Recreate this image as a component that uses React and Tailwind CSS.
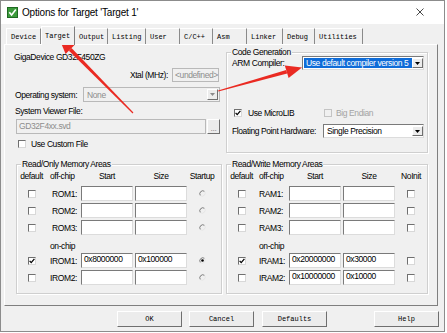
import React from 'react';

const ui = "whitespace-nowrap font-['Liberation_Sans',Arial,sans-serif] text-[8.5px] leading-[10px] tracking-[-0.4px] text-black";
const mono = "whitespace-nowrap font-['Liberation_Mono','Courier_New',monospace] text-[7px] leading-[10px] text-black";
const sunken = 'border border-t-[#7a7a7a] border-l-[#7a7a7a] border-r-[#dcdcdc] border-b-[#dcdcdc] bg-white';
const raised = 'border border-t-white border-l-white border-r-[#6f6f6f] border-b-[#6f6f6f] bg-[#ececec]';
const dimBox = 'border border-[#b9b9b9] bg-[#f0f0f0] text-[#8d8d8d]';

const tabs = [
  { label: 'Device', w: 'w-[35px] border-l border-l-white' },
  { label: 'Target', w: 'w-[34px]', active: true },
  { label: 'Output', w: 'w-[33px]' },
  { label: 'Listing', w: 'w-[38px]' },
  { label: 'User', w: 'w-[34px]' },
  { label: 'C/C++', w: 'w-[33px]' },
  { label: 'Asm', w: 'w-[34px]' },
  { label: 'Linker', w: 'w-[36px]' },
  { label: 'Debug', w: 'w-[32px]' },
  { label: 'Utilities', w: 'w-[48px]' },
];

const romRows = [
  { name: 'ROM1' },
  { name: 'ROM2' },
  { name: 'ROM3' },
  { name: 'IROM1', def: true, start: '0x8000000', size: '0x100000', on: true },
  { name: 'IROM2' },
];

const ramRows = [
  { name: 'RAM1' },
  { name: 'RAM2' },
  { name: 'RAM3' },
  { name: 'IRAM1', def: true, start: '0x20000000', size: '0x30000' },
  { name: 'IRAM2', start: '0x10000000', size: '0x10000' },
];

const roCols = ['w-[29px]', 'w-[31px] pr-[2px] pl-[2px]', 'w-[52px]', 'w-[52px]', 'w-[26px]'];
const rwCols = ['w-[29px]', 'w-[29px] pr-[4px] pl-[1px]', 'w-[52px]', 'w-[52px]', 'w-[28px]'];

function Check({ checked = false, disabled = false }) {
  return (
    <span
      className={`flex h-[8px] w-[8px] shrink-0 items-center justify-center border ${
        disabled ? 'border-[#c4c4c4] bg-[#f0f0f0]' : 'border-t-[#6f6f6f] border-l-[#6f6f6f] border-r-[#d8d8d8] border-b-[#d8d8d8] bg-white'
      }`}
    >
      {checked && (
        <svg width="6" height="6" viewBox="0 0 6 6">
          <path d="M0.6 2.9 L2.2 4.6 L5.4 0.9" fill="none" stroke="#000" strokeWidth="1.3" />
        </svg>
      )}
    </span>
  );
}

function Radio({ on }) {
  return (
    <svg width="7" height="7" viewBox="0 0 7 7">
      <path d="M5.6 1.4 A3 3 0 0 0 1.4 5.6" fill="none" stroke="#6f6f6f" strokeWidth="0.9" />
      <path d="M1.4 5.6 A3 3 0 0 0 5.6 1.4" fill="none" stroke="#e4e4e4" strokeWidth="0.9" />
      {on && <circle cx="3.5" cy="3.5" r="1.3" fill="#000" />}
    </svg>
  );
}

function DropBtn({ dim }) {
  return (
    <span className={`flex h-full w-[11px] shrink-0 items-center justify-center ${raised}`}>
      <svg width="5" height="3" viewBox="0 0 5 3">
        <path d="M0 0H5L2.5 3Z" fill={dim ? '#8a8a8a' : '#000'} />
      </svg>
    </span>
  );
}

function Field({ className, value }) {
  return (
    <div className={`h-[15px] pl-[2px] ${sunken} ${ui} leading-[11px] ${className}`}>
      {value}
    </div>
  );
}

function GroupBox({ title, className, children }) {
  return (
    <div className={`relative border border-[#cfcfcf] shadow-[inset_1px_1px_0_#fff,1px_1px_0_#fff] ${className}`}>
      <span className={`absolute -top-[6px] left-[4px] bg-[#f0f0f0] px-[1px] ${ui}`}>{title}</span>
      {children}
    </div>
  );
}

function MemRow({ cols, row, last }) {
  return (
    <div className="flex h-[15px] items-center gap-[2px]">
      <div className={`flex justify-center ${cols[0]}`}>
        <Check checked={row.def} />
      </div>
      <div className={`text-right ${ui} ${cols[1]}`}>{row.name}:</div>
      <Field className={cols[2]} value={row.start} />
      <Field className={cols[3]} value={row.size} />
      <div className={`flex justify-center ${cols[4]}`}>{last(row)}</div>
    </div>
  );
}

function MemTable({ cols, rows, lastHead, last }) {
  return (
    <div className="flex flex-col pt-[6px]">
      <div className={`flex h-[10px] gap-[2px] ${ui}`}>
        <span className={`text-center ${cols[0]}`}>default</span>
        <span className={`${cols[1]} text-left`}>off-chip</span>
        <span className={`text-center ${cols[2]}`}>Start</span>
        <span className={`text-center ${cols[3]}`}>Size</span>
        <span className={`text-center ${cols[4]}`}>{lastHead}</span>
      </div>
      <div className="mt-[5px] flex flex-col gap-[2px]">
        {rows.slice(0, 3).map((row) => (
          <MemRow key={row.name} cols={cols} row={row} last={last} />
        ))}
        <div className="flex h-[14px] items-end gap-[2px]">
          <span className={cols[0]} />
          <span className={`${ui} ${cols[1]}`}>on-chip</span>
        </div>
        {rows.slice(3).map((row) => (
          <MemRow key={row.name} cols={cols} row={row} last={last} />
        ))}
      </div>
    </div>
  );
}

function WinButton({ children, className = '' }) {
  return (
    <div className={`flex h-[16px] w-[65px] items-center justify-center ${raised} ${mono} ${className}`}>
      {children}
    </div>
  );
}

export default function App() {
  return (
    <div className="relative h-[333px] w-[447px] overflow-hidden bg-white">
      <div className="flex h-[332px] w-[445px] flex-col border border-[#8c8c8c] bg-[#f0f0f0]">
        {/* title bar */}
        <div className="flex h-[23px] items-center bg-white pl-[6px] pb-[1px]">
          <svg width="11" height="11" viewBox="0 0 11 11">
            <rect x="0.5" y="0.5" width="10" height="10" fill="#3c9b3c" stroke="#1f6a22" />
            <path d="M2.3 5.2 L4.6 8 L8.8 2.4" fill="none" stroke="#fff" strokeWidth="1.6" />
          </svg>
          <span className="ml-[4px] font-['Liberation_Sans',Arial,sans-serif] text-[10px] tracking-[-0.2px] text-black">
            Options for Target 'Target 1'
          </span>
          <svg className="ml-auto mr-[20px]" width="8" height="8" viewBox="0 0 8 8">
            <path d="M0.5 0.5 L7.5 7.5 M7.5 0.5 L0.5 7.5" stroke="#333" strokeWidth="0.9" />
          </svg>
        </div>

        {/* tabs */}
        <div className="flex h-[20px] items-end pl-[5px]">
          {tabs.map((tab) =>
            tab.active ? (
              <div
                key={tab.label}
                className={`relative z-10 -mb-px flex h-[19px] items-center border-l border-t border-r border-l-white border-t-white border-r-[#7f7f7f] bg-[#f0f0f0] pl-[3px] ${tab.w} ${mono}`}
              >
                {tab.label}
              </div>
            ) : (
              <div
                key={tab.label}
                className={`flex h-[16px] items-center border-t border-r border-t-white border-r-[#8a8a8a] pl-[4px] ${tab.w} ${mono}`}
              >
                {tab.label}
              </div>
            )
          )}
        </div>

        {/* tab panel */}
        <div className="ml-[3px] h-[262px] w-[434px] border border-l-white border-t-white border-r-[#7f7f7f] border-b-[#7f7f7f] pl-[9px] pt-[7px]">
          <div className="flex h-[101px]">
            <div className={`flex w-[208px] flex-col ${ui}`}>
              <div className="h-[10px]">GigaDevice GD32F450ZG</div>
              <div className="mt-[6px] flex items-center justify-end gap-[4px] pr-[3px]">
                <span>Xtal (MHz):</span>
                <div className={`h-[14px] w-[47px] pl-[2px] leading-[12px] ${dimBox}`}>&lt;undefined&gt;</div>
              </div>
              <div className="mt-[5px] flex items-center">
                <span className="w-[69px] pl-[1px]">Operating system:</span>
                <div className={`flex h-[15px] w-[137px] items-center p-[1px] ${dimBox}`}>
                  <span className="flex-1 pl-[2px]">None</span>
                  <DropBtn dim />
                </div>
              </div>
              <div className="mt-[4px] h-[10px] pl-[1px]">System Viewer File:</div>
              <div className="mt-[3px] flex pl-[2px]">
                <div className={`h-[15px] w-[190px] pl-[2px] leading-[13px] ${dimBox}`}>GD32F4xx.svd</div>
                <div className={`ml-[1px] flex h-[15px] w-[13px] items-end justify-center pb-[2px] leading-[6px] text-[#8d8d8d] ${raised}`}>
                  ...
                </div>
              </div>
              <div className="mt-[5px] flex items-center pl-[4px]">
                <Check />
                <span className="ml-[5px]">Use Custom File</span>
              </div>
            </div>

            <GroupBox title="Code Generation" className="ml-[4px] h-[101px] w-[202px]">
              <div className={`flex flex-col ${ui}`}>
                <div className="mt-[3px] flex items-center">
                  <span className="w-[75px] pl-[5px]">ARM Compiler:</span>
                  <div className={`flex h-[14px] w-[122px] p-[1px] pr-0 ${sunken}`}>
                    <span className="flex-1 bg-[#0f6cd8] pl-[2px] leading-[10px] text-white">Use default compiler version 5</span>
                    <DropBtn />
                  </div>
                </div>
                <div className="mt-[38px] flex items-center pl-[7px]">
                  <div className="flex w-[90px] items-center">
                    <Check checked />
                    <span className="ml-[6px]">Use MicroLIB</span>
                  </div>
                  <Check disabled />
                  <span className="ml-[4px] text-[#a3a3a3]">Big Endian</span>
                </div>
                <div className="mt-[6px] flex items-center">
                  <span className="w-[96px] pl-[5px]">Floating Point Hardware:</span>
                  <div className={`flex h-[14px] w-[101px] p-[1px] pr-0 ${sunken}`}>
                    <span className="flex-1 pl-[2px] leading-[10px]">Single Precision</span>
                    <DropBtn />
                  </div>
                </div>
              </div>
            </GroupBox>
          </div>

          <div className="mt-[11px] ml-[2px] flex">
            <GroupBox title="Read/Only Memory Areas" className="h-[130px] w-[206px]">
              <MemTable cols={roCols} rows={romRows} lastHead="Startup" last={(row) => <Radio on={row.on} />} />
            </GroupBox>
            <GroupBox title="Read/Write Memory Areas" className="ml-[4px] h-[130px] w-[202px]">
              <MemTable cols={rwCols} rows={ramRows} lastHead="NoInit" last={() => <Check />} />
            </GroupBox>
          </div>
        </div>

        {/* dialog buttons */}
        <div className="mt-[5px] flex pl-[116px]">
          <WinButton>OK</WinButton>
          <WinButton className="ml-[7px]">Cancel</WinButton>
          <WinButton className="ml-[8px] w-[64px]">Defaults</WinButton>
          <WinButton className="ml-[47px]">Help</WinButton>
        </div>
      </div>

      {/* red annotation arrows */}
      <svg className="pointer-events-none absolute inset-0" width="447" height="333" viewBox="0 0 447 333">
        <polygon points="68.9,50.7 71.5,48.1 133.4,112.6 132.6,113.4" fill="#ea2a22" />
        <polygon points="59,38 65.6,54 74.8,44.8" fill="#ea2a22" />
        <polygon points="287.2,73.4 286.2,69.9 218.1,90.5 218.3,91.5" fill="#ea2a22" />
        <polygon points="302,67.5 288.6,78 284.8,65.6" fill="#ea2a22" />
      </svg>
    </div>
  );
}
